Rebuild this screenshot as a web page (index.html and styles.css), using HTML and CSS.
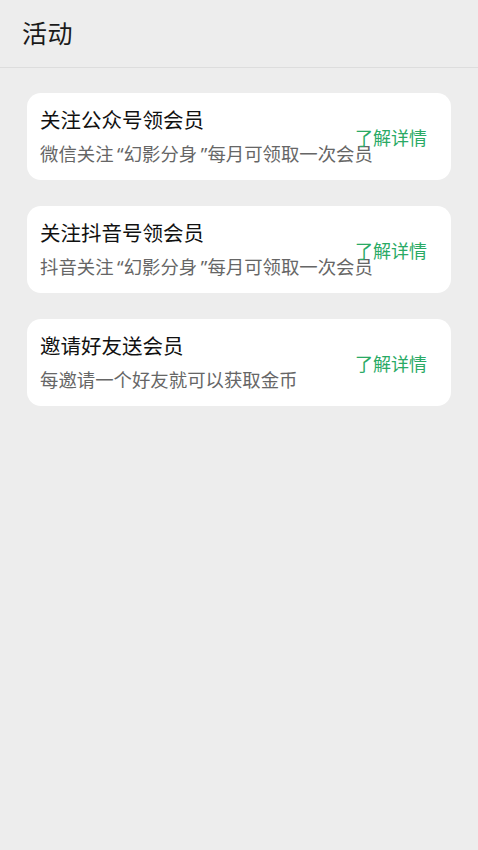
FILE: index.html
```html
<!DOCTYPE html>
<html lang="zh-CN">
<head>
<meta charset="utf-8">
<title>活动</title>
<link rel="stylesheet" href="styles.css">
</head>
<body>
<header class="topbar">
  <h1 class="topbar-title">活动</h1>
</header>
<main class="list">
  <section class="card">
    <div class="card-title">关注公众号领会员</div>
    <div class="card-desc">微信关注<span class="quote">“</span>幻影分身<span class="quote">”</span>每月可领取一次会员</div>
    <a class="card-link">了解详情</a>
  </section>
  <section class="card">
    <div class="card-title">关注抖音号领会员</div>
    <div class="card-desc">抖音关注<span class="quote">“</span>幻影分身<span class="quote">”</span>每月可领取一次会员</div>
    <a class="card-link">了解详情</a>
  </section>
  <section class="card">
    <div class="card-title">邀请好友送会员</div>
    <div class="card-desc">每邀请一个好友就可以获取金币</div>
    <a class="card-link">了解详情</a>
  </section>
</main>
</body>
</html>
```
FILE: styles.css
```css
html, body {
  margin: 0;
  padding: 0;
}
body {
  background: #ededed;
  font-family: "Noto Sans CJK SC", "Noto Sans", sans-serif;
  width: 478px;
  min-height: 850px;
}
.topbar {
  height: 68px;
  border-bottom: 1px solid #dddddd;
  display: flex;
  align-items: center;
  padding-left: 22px;
  box-sizing: border-box;
}
.topbar-title {
  margin: -3px 0 0 0;
  font-size: 25px;
  font-weight: 400;
  color: #1a1a1a;
  line-height: 32px;
  letter-spacing: 0.5px;
}
.list {
  display: flex;
  flex-direction: column;
  gap: 26px;
  padding: 25px 27px 0 27px;
}
.card {
  background: #ffffff;
  border-radius: 14px;
  display: grid;
  grid-template-columns: 1fr auto;
  grid-template-rows: auto auto;
  row-gap: 8px;
  padding: 12px 24px 13px 13px;
}
.card-title {
  grid-column: 1;
  grid-row: 1;
  font-size: 20.5px;
  line-height: 28px;
  color: #111111;
}
.card-desc {
  grid-column: 1 / 3;
  grid-row: 2;
  font-family: "Noto Sans", "Noto Sans CJK SC", sans-serif;
  font-size: 18.4px;
  line-height: 26px;
  color: #666666;
  white-space: nowrap;
}
.quote {
  margin-left: 3.5px;
}
.card-link {
  grid-column: 2;
  grid-row: 1 / 3;
  align-self: center;
  font-size: 18px;
  line-height: 26px;
  color: #2aaa65;
  white-space: nowrap;
  position: relative;
  top: 1px;
}
```
